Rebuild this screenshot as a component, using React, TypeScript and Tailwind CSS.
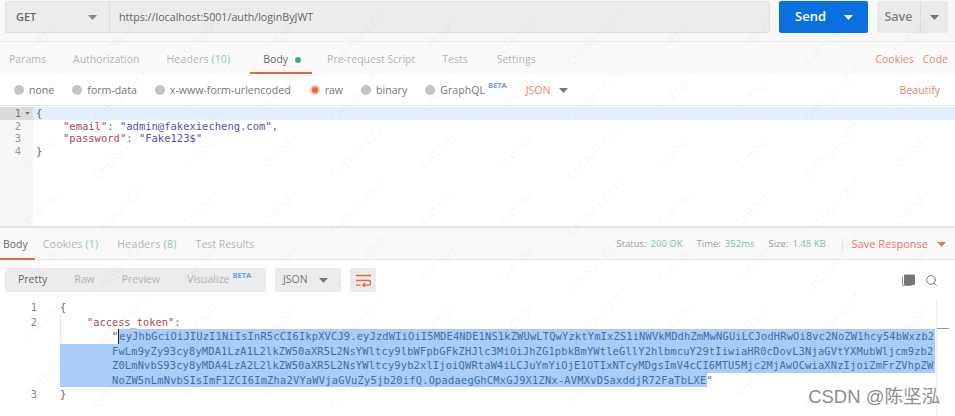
import { Search } from "lucide-react";

const sans = "font-['Open_Sans','Noto_Sans',sans-serif]";
const mono = "font-['DejaVu_Sans_Mono','Liberation_Mono',monospace]";

const Caret = ({ className }: { className: string }) => (
  <svg width="9" height="5" viewBox="0 0 9 5" className={className}>
    <path d="M0 0h9L4.5 5z" fill="currentColor" />
  </svg>
);

const Tab = ({ label, count }: { label: string; count?: string }) => (
  <span className="text-[#b4b4b4]">
    {label}
    {count && <span className="text-[#8fc9ad]"> {count}</span>}
  </span>
);

const Radio = ({ label, on }: { label: string; on?: boolean }) => (
  <div className="flex items-center gap-[5px]">
    <span
      className={
        on
          ? "w-[10px] h-[10px] rounded-full bg-[#e8663d] border-2 border-[#f3c4b4]"
          : "w-[10px] h-[10px] rounded-full bg-[#c4c4c4]"
      }
    />
    <span className="text-[#777]">{label}</span>
  </div>
);

const tokenLines = [
  "FwLm9yZy93cy8yMDA1LzA1L2lkZW50aXR5L2NsYWltcy9lbWFpbGFkZHJlc3MiOiJhZG1pbkBmYWtleGllY2hlbmcuY29tIiwiaHR0cDovL3NjaGVtYXMubWljcm9zb2",
  "Z0LmNvbS93cy8yMDA4LzA2L2lkZW50aXR5L2NsYWltcy9yb2xlIjoiQWRtaW4iLCJuYmYiOjE1OTIxNTcyMDgsImV4cCI6MTU5Mjc2MjAwOCwiaXNzIjoiZmFrZVhpZW",
];

const lastLine = "NoZW5nLmNvbSIsImF1ZCI6ImZha2VYaWVjaGVuZy5jb20ifQ.OpadaegGhCMxGJ9X1ZNx-AVMXvDSaxddjR72FaTbLXE";

const marks = Array.from({ length: 84 }, (_, i) => i);

export default function App() {
  return (
    <div className={`relative w-[955px] h-[416px] overflow-hidden bg-white text-[11px] ${sans}`}>
      {/* Request url bar */}
      <div className="flex h-[42px] bg-[#f8f8f8] pl-[5px] pr-[7px] pt-[1px] gap-[9px] border-b border-[#ececec]">
        <div className="flex flex-1 h-[32px] rounded-[2px] bg-[#ececec] border border-[#e0e0e0]">
          <div className="flex w-[104px] items-center justify-between pl-[10px] pr-[12px] border-r border-[#dcdcdc] font-semibold text-[#666]">
            GET
            <Caret className="text-[#888]" />
          </div>
          <div className="flex items-center pl-[9px] text-[#666] text-[10.7px]">https://localhost:5001/auth/loginByJWT</div>
        </div>
        <div className="flex w-[89px] h-[32px] items-center rounded-[2px] bg-[#0b6fe0] text-white">
          <span className="pl-[16px] w-[62px] text-[13px] font-semibold">Send</span>
          <Caret className="ml-[3px] text-white" />
        </div>
        <div className="flex w-[71px] h-[32px] items-center rounded-[2px] bg-[#eaeaea] text-[#808080]">
          <span className="flex w-[44px] h-full items-center justify-center border-r border-[#dcdcdc] text-[12.5px] font-semibold">Save</span>
          <Caret className="ml-[9px] text-[#777]" />
        </div>
      </div>

      {/* Request tabs */}
      <div className="flex h-[33px] items-center bg-[#fafafa] pl-[9px] pr-[7px] pt-[3px] text-[10.5px]">
        <div className="flex items-center gap-[27px]">
          <Tab label="Params" />
          <Tab label="Authorization" />
          <span className="text-[#b4b4b4] mr-[6px] tracking-[0.15px]">
            Headers <span className="text-[#8fc9ad]">(10)</span>
          </span>
          <div className="relative flex items-center gap-[7px] text-[#666] -mr-[1px]">
            Body
            <span className="w-[6px] h-[6px] rounded-full bg-[#3fae85]" />
            <span className="absolute left-[-13px] right-[-11px] top-[20px] h-[2px] bg-[#e8663d]" />
          </div>
          <Tab label="Pre-request Script" />
          <span className="text-[#b4b4b4] mr-[2px]">Tests</span>
          <Tab label="Settings" />
        </div>
        <div className="ml-auto flex gap-[9px] text-[#e08a70]">
          <span>Cookies</span>
          <span>Code</span>
        </div>
      </div>

      {/* Body type */}
      <div className="flex h-[30px] items-center pl-[14px] pr-[15px] pt-[1px] text-[10.6px] gap-[18px]">
        <Radio label="none" />
        <Radio label="form-data" />
        <div className="mr-[1px]">
          <Radio label="x-www-form-urlencoded" />
        </div>
        <Radio label="raw" on />
        <Radio label="binary" />
        <div className="flex items-start">
          <Radio label="GraphQL" />
          <span className="ml-[3px] -mt-[3px] text-[7.5px] font-bold text-[#6ba0dd]">BETA</span>
        </div>
        <div className="flex items-center gap-[8px] ml-[-3px] pl-[4px] text-[#e08a70]">
          JSON
          <Caret className="text-[#777]" />
        </div>
        <span className="ml-auto text-[#e08a70]">Beautify</span>
      </div>

      {/* Editor */}
      <div className={`h-[121px] border-t border-[#e4e4e4] pt-[1px] text-[10.5px] leading-[12.5px] ${mono}`}>
        <div className="flex h-full">
          <div className="w-[33px] h-full bg-[#f7f7f7] text-[#999] text-right pr-[12px]">
            <div className="relative -mr-[12px] pr-[12px] bg-[#dcdcdc] text-[#777]">
              1
              <svg width="5" height="3" viewBox="0 0 5 3" className="absolute right-[3px] top-[5px] text-[#777]">
                <path d="M0 0h5L2.5 3z" fill="currentColor" />
              </svg>
            </div>
            <div>2</div>
            <div>3</div>
            <div>4</div>
          </div>
          <div className="flex-1 text-[#666]">
            <div className="pl-[3px] bg-[#e4effd]">{"{"}</div>
            <div className="pl-[30px] whitespace-pre">
              <span className="text-[#a8485a]">"email"</span>: <span className="text-[#5a50b0]">"admin@fakexiecheng.com"</span>,
            </div>
            <div className="pl-[30px] whitespace-pre">
              <span className="text-[#a8485a]">"password"</span>: <span className="text-[#5a50b0]">"Fake123$"</span>
            </div>
            <div className="pl-[3px]">{"}"}</div>
          </div>
        </div>
      </div>

      {/* Response tabs */}
      <div className="flex h-[34px] items-center bg-[#f9f9f9] border-t-2 border-b border-[#e6e6e6] pl-[3px] pr-[9px] pt-[2px] text-[10.5px]">
        <div className="flex items-center gap-[19px]">
          <div className="relative text-[#666] mr-[-4px]">
            Body
            <span className="absolute left-[-3px] right-[-7px] top-[21px] h-[2px] bg-[#e8663d]" />
          </div>
          <span className="text-[#b4b4b4] tracking-[0.2px]">
            Cookies <span className="text-[#8fc9ad]">(1)</span>
          </span>
          <span className="text-[#b4b4b4] tracking-[0.3px]">
            Headers <span className="text-[#8fc9ad]">(8)</span>
          </span>
          <Tab label="Test Results" />
        </div>
        <div className="ml-auto flex items-center text-[9.5px] text-[#999]">
          <span>Status:</span>
          <span className="ml-[4px] text-[#7cc3a5]">200 OK</span>
          <span className="ml-[14px]">Time:</span>
          <span className="ml-[4px] text-[#7cc3a5]">352ms</span>
          <span className="ml-[14px]">Size:</span>
          <span className="ml-[4px] text-[#7cc3a5]">1.48 KB</span>
          <span className="ml-[16px] h-[14px] border-l border-[#e4e4e4]" />
          <span className="ml-[9px] text-[11px] text-[#e0775a]">Save Response</span>
          <Caret className="ml-[9px] text-[#e0775a]" />
        </div>
      </div>

      {/* Response toolbar */}
      <div className="flex h-[38px] items-center pl-[5px] pr-[17px] pt-[2px] text-[10.5px]">
        <div className="flex h-[24px] w-[261px] items-center rounded-[2px] bg-[#ececec] pl-[13px] gap-[27px] text-[#b4b4b4]">
          <span className="text-[#666]">Pretty</span>
          <span>Raw</span>
          <span>Preview</span>
          <div className="flex items-start">
            <span>Visualize</span>
            <span className="ml-[3px] -mt-[2px] text-[7.5px] font-bold text-[#6ba0dd]">BETA</span>
          </div>
        </div>
        <div className="ml-[9px] flex h-[24px] w-[66px] items-center justify-between rounded-[2px] bg-[#ececec] pl-[8px] pr-[13px] text-[#777]">
          JSON
          <Caret className="text-[#777]" />
        </div>
        <div className="ml-[9px] flex h-[24px] w-[26px] items-center justify-center rounded-[2px] bg-[#ececec]">
          <svg width="15" height="13" viewBox="0 0 15 13" fill="none" stroke="#e8663d" strokeWidth="1.4">
            <path d="M0 1.5h15M0 6.5h12.5a2.2 2.2 0 0 1 0 4.6H7M9 9l-2.2 2.1 2.2 1.7M0 11.1h4.5" />
          </svg>
        </div>
        <div className="ml-auto flex items-center gap-[10px]">
          <svg width="13" height="13" viewBox="0 0 13 13">
            <path d="M0 2.5h1V11h8.5v1H1a1 1 0 0 1-1-1z" fill="#999" />
            <rect x="2" y="0.5" width="11" height="10.5" rx="1" fill="#777" />
          </svg>
          <Search size={13} strokeWidth={1.8} className="text-[#777]" />
        </div>
      </div>

      {/* Response body */}
      <div className={`flex pt-[2px] text-[10.35px] leading-[14.5px] text-[#666] ${mono}`}>
        <div className="w-[37px] text-right text-[#7a8a98]">
          <div>1</div>
          <div>2</div>
          <div className="mt-[58px]">3</div>
        </div>
        <div className="ml-[23px] w-[875px]">
          <div>{"{"}</div>
          <div className="pl-[26px] border-l border-[#e8e8e8] whitespace-pre">
            <span className="text-[#a8485a]">"access_token"</span>:
          </div>
          <div className="border-l border-[#e8e8e8] pl-[51px] whitespace-pre h-[14.5px] flex">
            <span>"</span>
            <span className="flex-1 bg-[#a9cdf8] text-[#3d6fa8] border-l border-[#222] tracking-[0.19px]">
              eyJhbGciOiJIUzI1NiIsInR5cCI6IkpXVCJ9.eyJzdWIiOiI5MDE4NDE1NS1kZWUwLTQwYzktYmIxZS1iNWVkMDdhZmMwNGUiLCJodHRwOi8vc2NoZW1hcy54bWxzb2
            </span>
          </div>
          {tokenLines.map((line) => (
            <div key={line} className="bg-[#a9cdf8] text-[#3d6fa8] pl-[52px] whitespace-pre h-[14.5px] tracking-[0.19px]">
              {line}
            </div>
          ))}
          <div className="flex h-[14.5px] whitespace-pre">
            <span className="bg-[#a9cdf8] text-[#3d6fa8] pl-[52px] tracking-[0.235px]">{lastLine}</span>
            <span>"</span>
          </div>
          <div>{"}"}</div>
        </div>
      </div>

      {/* Scrollbar edge beside the response */}
      <div className="absolute left-[936px] top-[300px] bottom-0 w-[12px] border-l border-[#ececec]">
        <span className="absolute left-0 top-[28px] h-[1px] w-[12px] bg-[#999]" />
      </div>

      {/* Watermarks over the screenshot */}
      <div className="pointer-events-none absolute left-[3px] top-[8px] grid grid-cols-[repeat(12,79px)] auto-rows-[57px] text-[12px] text-black/[0.05]">
        {marks.map((i) => (
          <span key={i} className="flex items-center justify-center -rotate-45 whitespace-nowrap">
            {i % 3 === 1 ? "CHENJH-CZ IT" : "CHENJH"}
          </span>
        ))}
      </div>

      {/* CSDN stamp */}
      <span className="absolute right-[15px] top-[385px] text-[18.5px] leading-[24px] text-[#8d8d8d] font-['Liberation_Sans','Noto_Sans_CJK_SC',sans-serif]">
        CSDN @陈坚泓
      </span>
    </div>
  );
}
